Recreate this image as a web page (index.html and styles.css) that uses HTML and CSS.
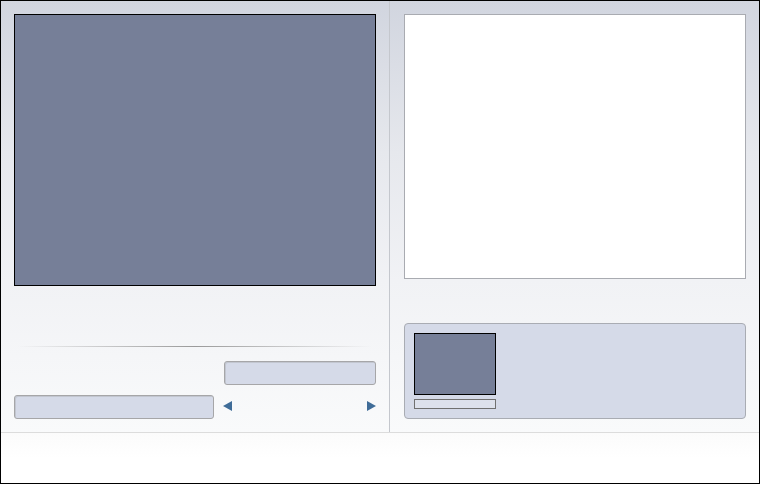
FILE: index.html
```html
<!DOCTYPE html>
<html lang="en">
<head>
    <meta charset="UTF-8">
    <meta name="viewport" content="width=device-width, initial-scale=1.0">
    <title>Viewer</title>
    <link rel="stylesheet" href="styles.css">
</head>
<body>
    <div class="window">
        <div class="main">
            <div class="col-left">
                <div class="preview"></div>
                <div class="separator"></div>
                <div class="row-top">
                    <div class="btn btn-small"></div>
                </div>
                <div class="row-bottom">
                    <div class="btn btn-wide"></div>
                    <div class="nav">
                        <span class="arrow arrow-left"></span>
                        <span class="arrow arrow-right"></span>
                    </div>
                </div>
            </div>
            <div class="col-right">
                <div class="sheet"></div>
                <div class="card">
                    <div class="thumb-box">
                        <div class="thumb"></div>
                        <div class="thumb-label"></div>
                    </div>
                </div>
            </div>
        </div>
        <div class="footer"></div>
    </div>
</body>
</html>
```

FILE: styles.css
```css
*{
    margin: 0;
    padding: 0;
    box-sizing: border-box;
}
body{
    width: 760px;
    height: 484px;
    font-family: "Liberation Sans", Arial, sans-serif;
}
.window{
    width: 760px;
    height: 484px;
    border: 1px solid #000;
    display: flex;
    flex-direction: column;
    background: #fff;
}
.main{
    height: 431px;
    display: flex;
    background: linear-gradient(to bottom, #d1d5df 0%, #e6e8ed 35%, #f1f2f5 65%, #f9fafb 100%);
}
.col-left{
    width: 389px;
    padding: 13px 13px 0 13px;
    border-right: 1px solid #c4c7cd;
    display: flex;
    flex-direction: column;
}
.preview{
    width: 362px;
    height: 272px;
    background-color: #767f98;
    border: 1px solid #000;
}
.separator{
    height: 1px;
    margin: 60px 4px 0 4px;
    background: linear-gradient(to right, rgba(150,150,150,0), #9a9a9a 50%, rgba(150,150,150,0));
}
.row-top{
    display: flex;
    justify-content: flex-end;
    margin-top: 14px;
}
.btn{
    height: 24px;
    border: 1px solid #a6a6a8;
    border-radius: 3px;
    background-color: #d5dae8;
    box-shadow: inset 1px 1px 0 #c2c6d0;
}
.btn-small{
    width: 152px;
}
.row-bottom{
    display: flex;
    align-items: center;
    margin-top: 10px;
}
.btn-wide{
    width: 200px;
}
.nav{
    flex: 1;
    display: flex;
    justify-content: space-between;
    padding-left: 9px;
    margin-top: -2px;
}
.arrow{
    width: 0;
    height: 0;
    border-top: 5px solid transparent;
    border-bottom: 5px solid transparent;
}
.arrow-left{
    border-right: 9px solid #3f6c98;
}
.arrow-right{
    border-left: 9px solid #3f6c98;
}
.col-right{
    flex: 1;
    padding: 13px 13px 0 14px;
    display: flex;
    flex-direction: column;
}
.sheet{
    width: 342px;
    height: 265px;
    background: #fff;
    border: 1px solid #a9abb1;
}
.card{
    width: 342px;
    height: 96px;
    margin-top: 44px;
    border: 1px solid #a9acb3;
    border-radius: 4px;
    background-color: #d5dae8;
    padding: 9px 9px;
}
.thumb-box{
    width: 82px;
}
.thumb{
    height: 62px;
    background-color: #767f98;
    border: 1px solid #000;
}
.thumb-label{
    height: 10px;
    margin-top: 4px;
    border: 1px solid #707070;
    background-color: #dde1ec;
}
.footer{
    flex: 1;
    border-top: 1px solid #dcdcdc;
    background: linear-gradient(to bottom, #fbfbfb, #ffffff 50%);
}
```
